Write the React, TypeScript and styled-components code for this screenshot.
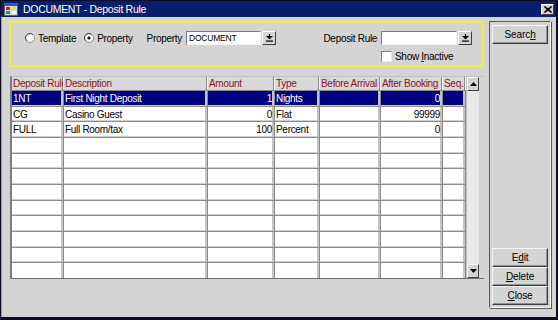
import React from 'react';
import styled, { createGlobalStyle } from 'styled-components';

const GlobalStyle = createGlobalStyle`
  html, body {
    margin: 0;
    padding: 0;
    background: #d4d4d4;
  }
  * {
    box-sizing: border-box;
  }
`;

interface Rule {
    code: string;
    description: string;
    amount: string;
    type: string;
    beforeArrival: string;
    afterBooking: string;
    seq: string;
}

const rules: Rule[] = [
    { code: '1NT', description: 'First Night Deposit', amount: '1', type: 'Nights', beforeArrival: '', afterBooking: '0', seq: '' },
    { code: 'CG', description: 'Casino Guest', amount: '0', type: 'Flat', beforeArrival: '', afterBooking: '99999', seq: '' },
    { code: 'FULL', description: 'Full Room/tax', amount: '100', type: 'Percent', beforeArrival: '', afterBooking: '0', seq: '' },
];

const columns = [
    { title: 'Deposit Rule', width: 52, align: 'left' },
    { title: 'Description', width: 144, align: 'left' },
    { title: 'Amount', width: 67, align: 'right' },
    { title: 'Type', width: 45, align: 'left' },
    { title: 'Before Arrival', width: 61, align: 'left' },
    { title: 'After Booking', width: 62, align: 'right' },
    { title: 'Seq.', width: 23, align: 'left' },
];

const TOTAL_ROWS = 12;

const Window = styled.div`
  width: 558px;
  height: 320px;
  background: #d4d4d4;
  border: 1px solid #0c0c24;
  border-right-width: 2px;
  border-bottom-width: 3px;
  display: flex;
  flex-direction: column;
  font-family: "Liberation Sans", Arial, sans-serif;
  font-size: 10px;
  letter-spacing: -0.3px;
  color: #000;
`;

const TitleBar = styled.div`
  height: 16px;
  background: #0a1f6b;
  color: #fff;
  display: flex;
  align-items: center;
  padding: 0 2px 0 3px;
  gap: 5px;
  font-size: 10.5px;
`;

const TitleText = styled.span`
  flex: 1;
`;

const CloseBox = styled.div`
  width: 13px;
  height: 11px;
  background: #d4d4d4;
  border: 1px solid;
  border-color: #fff #404040 #404040 #fff;
  display: flex;
  align-items: center;
  justify-content: center;
`;

const Body = styled.div`
  flex: 1;
  display: flex;
  gap: 5px;
  padding: 4px 5px 9px 7px;
  border-left: 1px solid #9a9a9a;
`;

const LeftColumn = styled.div`
  width: 476px;
  display: flex;
  flex-direction: column;
  gap: 9px;
`;

const FilterBox = styled.div`
  height: 46px;
  border: 2px solid #f0f03c;
  display: grid;
  grid-template-rows: 20px 16px;
  padding: 5px 0 0 14px;
`;

const FilterRow = styled.div`
  display: flex;
  align-items: center;
`;

const RadioLabel = styled.label<{ gapRight: number }>`
  display: flex;
  align-items: center;
  gap: 3px;
  margin-right: ${(p) => p.gapRight}px;
`;

const FieldLabel = styled.span`
  margin-right: 4px;
`;

const Combo = styled.div`
  display: flex;
  gap: 1px;
  height: 14px;
`;

const TextBox = styled.div<{ w: number }>`
  width: ${(p) => p.w}px;
  height: 14px;
  background: #fff;
  border: 1px solid;
  border-color: #7a7a7a #f4f4f4 #f4f4f4 #7a7a7a;
  font-size: 8.5px;
  letter-spacing: -0.2px;
  padding: 1px 2px;
  line-height: 10px;
`;

const DropButton = styled.div`
  width: 14px;
  height: 14px;
  background: #d4d4d4;
  border: 1px solid;
  border-color: #fff #404040 #404040 #fff;
  display: flex;
  align-items: center;
  justify-content: center;
`;

const Spacer = styled.div`
  flex: 1;
`;

const RightGap = styled.div`
  width: 10px;
`;

const CheckRow = styled.div`
  display: flex;
  align-items: center;
  gap: 3px;
  margin-left: 356px;
`;

const CheckBox = styled.div`
  width: 11px;
  height: 11px;
  background: #fff;
  border: 1px solid;
  border-color: #808080 #e8e8e8 #e8e8e8 #808080;
`;

const Mnemonic = styled.span`
  text-decoration: underline;
`;

const GridFrame = styled.div`
  height: 203px;
  display: flex;
  border-left: 2px solid #7c7c7c;
  border-top: 1px solid #c0c0c0;
  border-bottom: 1px solid #6c6c6c;
  margin-left: 1px;
`;

const Table = styled.div`
  width: 454px;
  display: flex;
  flex-direction: column;
  background: #fff;
`;

const HeaderRow = styled.div`
  height: 14px;
  display: flex;
  background: #d8d8d8;
  border-bottom: 1px solid #8a8a8a;
`;

const HeaderCell = styled.div<{ w: number }>`
  width: ${(p) => p.w}px;
  color: #8b1414;
  padding: 0 1px;
  line-height: 13px;
  white-space: nowrap;
  overflow: hidden;
  border-right: 1px solid #f4f4f4;
  box-shadow: inset -1px 0 #8a8a8a;
`;

const Rows = styled.div`
  flex: 1;
  display: flex;
  flex-direction: column;
`;

const Row = styled.div<{ selected?: boolean }>`
  flex: 1;
  display: flex;
  background: ${(p) => (p.selected ? '#000080' : '#fff')};
  color: ${(p) => (p.selected ? '#fff' : '#000')};
  border-bottom: 1px solid #8c8c8c;
  box-shadow: inset 0 -1px #cfcfcf;
  &:last-child {
    border-bottom: none;
    box-shadow: none;
  }
`;

const Cell = styled.div<{ w: number; align: string }>`
  width: ${(p) => p.w}px;
  padding: 0 2px 0 1px;
  display: flex;
  align-items: center;
  justify-content: ${(p) => (p.align === 'right' ? 'flex-end' : 'flex-start')};
  white-space: nowrap;
  overflow: hidden;
  border-right: 1px solid #8a8a8a;
  box-shadow: inset -2px 0 #c4c4c4;
`;

const ScrollBar = styled.div`
  width: 13px;
  display: flex;
  flex-direction: column;
  background: #e6e6e6;
  border-left: 1px solid #bcbcbc;
`;

const ScrollButton = styled.div`
  height: 14px;
  background: #d4d4d4;
  border: 1px solid;
  border-color: #fff #404040 #404040 #fff;
  display: flex;
  align-items: center;
  justify-content: center;
`;

const ScrollTrack = styled.div`
  flex: 1;
  background: #e9e9e9;
`;

const ButtonPanel = styled.div`
  width: 62px;
  display: flex;
  flex-direction: column;
  padding: 3px 2px 2px 2px;
  border: 1px solid;
  border-color: #5a5a5a #f4f4f4 #f4f4f4 #5a5a5a;
  box-shadow: 1px 1px 0 #5a5a5a;
`;

const PanelButton = styled.div`
  height: 19px;
  background: #d4d4d4;
  border: 1px solid;
  border-color: #f8f8f8 #3c3c3c #3c3c3c #f8f8f8;
  box-shadow: inset -1px -1px #909090;
  display: flex;
  align-items: center;
  justify-content: center;
  letter-spacing: -0.1px;
`;

const RadioIcon: React.FC<{ checked?: boolean }> = ({ checked }) => (
    <svg width="10" height="10" viewBox="0 0 10 10">
        <circle cx="5" cy="5" r="4.5" fill="#fff" stroke="#8a8a8a" strokeWidth="1" />
        <path d="M1.8 7.8 A4 4 0 0 1 7.8 1.8" fill="none" stroke="#404040" strokeWidth="1" />
        {checked && <circle cx="5" cy="5" r="1.6" fill="#000" />}
    </svg>
);

const DropArrow: React.FC = () => (
    <svg width="7" height="8" viewBox="0 0 7 8">
        <rect x="3" y="0" width="1" height="2" fill="#000" />
        <path d="M0 2 H7 L3.5 5.5 Z" fill="#000" />
        <rect x="0" y="6.5" width="7" height="1.2" fill="#000" />
    </svg>
);

const Triangle: React.FC<{ up?: boolean }> = ({ up }) => (
    <svg width="7" height="4" viewBox="0 0 7 4">
        <path d={up ? 'M0 4 H7 L3.5 0 Z' : 'M0 0 H7 L3.5 4 Z'} fill="#000" />
    </svg>
);

const AppIcon: React.FC = () => (
    <svg width="14" height="13" viewBox="0 0 14 13">
        <rect x="0.5" y="0.5" width="13" height="12" fill="#d8d8d8" stroke="#606060" />
        <rect x="1" y="1" width="12" height="2" fill="#3050c0" />
        <rect x="2" y="4" width="4" height="3" fill="#e02020" />
        <rect x="8" y="4" width="4" height="3" fill="#f0e020" />
        <rect x="2" y="8" width="4" height="3" fill="#20a040" />
        <rect x="8" y="8" width="4" height="3" fill="#ffffff" />
    </svg>
);

const CloseGlyph: React.FC = () => (
    <svg width="8" height="7" viewBox="0 0 8 7">
        <path d="M0.5 0.5 L7.5 6.5 M7.5 0.5 L0.5 6.5" stroke="#000" strokeWidth="1.6" />
    </svg>
);

const App: React.FC = () => {
    const emptyRows = TOTAL_ROWS - rules.length;

    return (
        <>
            <GlobalStyle />
            <Window>
                <TitleBar>
                    <AppIcon />
                    <TitleText>DOCUMENT - Deposit Rule</TitleText>
                    <CloseBox>
                        <CloseGlyph />
                    </CloseBox>
                </TitleBar>
                <Body>
                    <LeftColumn>
                        <FilterBox>
                            <FilterRow>
                                <RadioLabel gapRight={8}>
                                    <RadioIcon />
                                    Template
                                </RadioLabel>
                                <RadioLabel gapRight={14}>
                                    <RadioIcon checked />
                                    Property
                                </RadioLabel>
                                <FieldLabel>Property</FieldLabel>
                                <Combo>
                                    <TextBox w={75}>DOCUMENT</TextBox>
                                    <DropButton>
                                        <DropArrow />
                                    </DropButton>
                                </Combo>
                                <Spacer />
                                <FieldLabel>Deposit Rule</FieldLabel>
                                <Combo>
                                    <TextBox w={76} />
                                    <DropButton>
                                        <DropArrow />
                                    </DropButton>
                                </Combo>
                                <RightGap />
                            </FilterRow>
                            <FilterRow>
                                <CheckRow>
                                    <CheckBox />
                                    <span>
                                        Show <Mnemonic>I</Mnemonic>nactive
                                    </span>
                                </CheckRow>
                            </FilterRow>
                        </FilterBox>
                        <GridFrame>
                            <Table>
                                <HeaderRow>
                                    {columns.map((col) => (
                                        <HeaderCell key={col.title} w={col.width}>
                                            {col.title}
                                        </HeaderCell>
                                    ))}
                                </HeaderRow>
                                <Rows>
                                    {rules.map((rule, index) => {
                                        const values = [
                                            rule.code,
                                            rule.description,
                                            rule.amount,
                                            rule.type,
                                            rule.beforeArrival,
                                            rule.afterBooking,
                                            rule.seq,
                                        ];
                                        return (
                                            <Row key={rule.code} selected={index === 0}>
                                                {values.map((value, i) => (
                                                    <Cell key={i} w={columns[i].width} align={columns[i].align}>
                                                        {value}
                                                    </Cell>
                                                ))}
                                            </Row>
                                        );
                                    })}
                                    {Array.from({ length: emptyRows }).map((_, index) => (
                                        <Row key={'empty' + index}>
                                            {columns.map((col) => (
                                                <Cell key={col.title} w={col.width} align={col.align} />
                                            ))}
                                        </Row>
                                    ))}
                                </Rows>
                            </Table>
                            <ScrollBar>
                                <ScrollButton>
                                    <Triangle up />
                                </ScrollButton>
                                <ScrollTrack />
                                <ScrollButton>
                                    <Triangle />
                                </ScrollButton>
                            </ScrollBar>
                        </GridFrame>
                    </LeftColumn>
                    <ButtonPanel>
                        <PanelButton>
                            Searc<Mnemonic>h</Mnemonic>
                        </PanelButton>
                        <Spacer />
                        <PanelButton>
                            E<Mnemonic>d</Mnemonic>it
                        </PanelButton>
                        <PanelButton>
                            <Mnemonic>D</Mnemonic>elete
                        </PanelButton>
                        <PanelButton>
                            <Mnemonic>C</Mnemonic>lose
                        </PanelButton>
                    </ButtonPanel>
                </Body>
            </Window>
        </>
    );
};

export default App;
